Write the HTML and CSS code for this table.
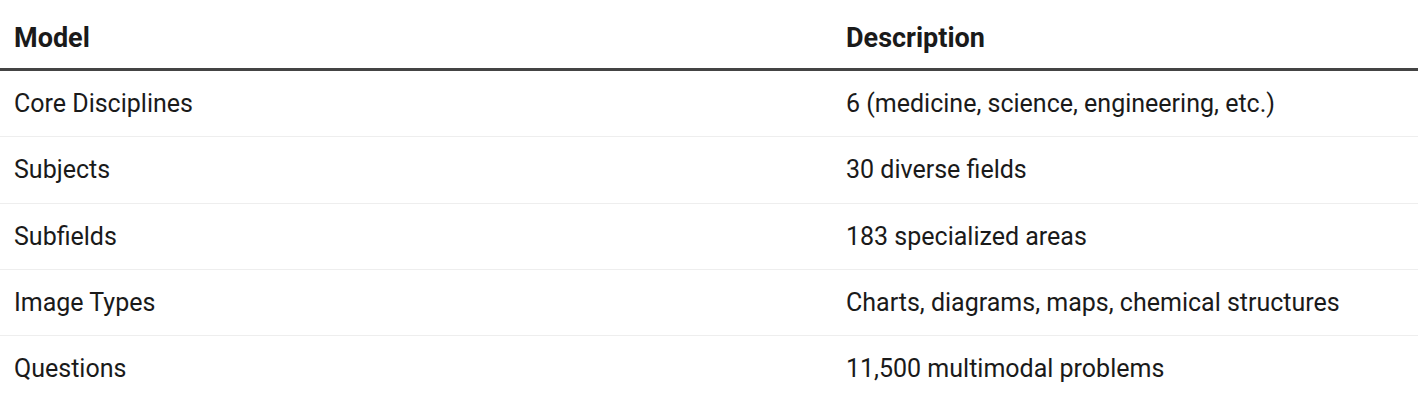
FILE: index.html
```html
<!DOCTYPE html>
<html>
<head>
<meta charset="utf-8">
<link rel="stylesheet" href="styles.css">
</head>
<body>
<table class="spec-table">
  <colgroup>
    <col class="col-model">
    <col class="col-desc">
  </colgroup>
  <thead>
    <tr><th>Model</th><th>Description</th></tr>
  </thead>
  <tbody>
    <tr><td>Core Disciplines</td><td>6 (medicine, science, engineering, etc.)</td></tr>
    <tr><td>Subjects</td><td>30 diverse fields</td></tr>
    <tr><td>Subfields</td><td>183 specialized areas</td></tr>
    <tr><td>Image Types</td><td>Charts, diagrams, maps, chemical structures</td></tr>
    <tr><td>Questions</td><td>11,500 multimodal problems</td></tr>
  </tbody>
</table>
</body>
</html>
```
FILE: styles.css
```css
html, body {
  margin: 0;
  padding: 0;
  background: #ffffff;
}
body {
  font-family: Roboto, "Liberation Sans", Arial, sans-serif;
  color: #1a1a1a;
}
.spec-table {
  width: 1418px;
  border-collapse: collapse;
  table-layout: fixed;
  font-size: 25px;
}
.col-model { width: 832px; }
.col-desc { width: 586px; }
.spec-table th {
  text-align: left;
  font-weight: 700;
  font-size: 27px;
  padding: 20px 14px 12px;
  line-height: 36px;
  border-bottom: 3px solid #444444;
}
.spec-table td {
  padding: 15px 14px;
  line-height: 35.33px;
  border-bottom: 1px solid #eeeeee;
}
.spec-table tbody tr:last-child td {
  border-bottom: none;
}
```
